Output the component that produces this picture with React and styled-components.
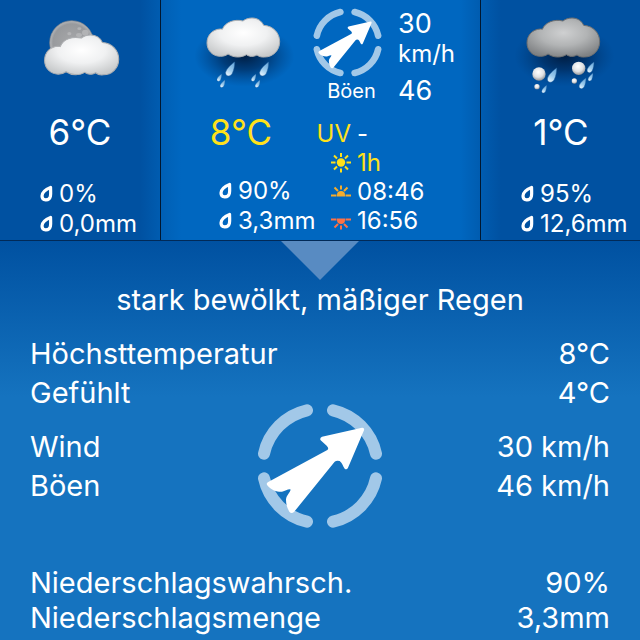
import React from "react";
import styled, { createGlobalStyle, css } from "styled-components";

const GlobalStyle = createGlobalStyle`
  *, *::before, *::after { box-sizing: border-box; }
  body {
    margin: 0;
    background: #1573bf;
    color: #fff;
    font-family: Inter, "Liberation Sans", sans-serif;
    font-weight: 400;
  }
`;

const Page = styled.main`
  min-height: 100vh;
  display: flex;
  flex-direction: column;
`;

const Days = styled.div`
  display: grid;
  grid-template-columns: 1fr 2fr 1fr;
  border-bottom: 1px solid #012a58;
`;

const cardTone = {
  before: "linear-gradient(270deg, #005cb0 0, #0051a1 20px)",
  active: "linear-gradient(90deg, #005fb4 0, #0067c0 20px, #0067c0 calc(100% - 20px), #005cb0 100%)",
  after: "linear-gradient(90deg, #005cb0 0, #0051a1 20px)",
};

const DayCard = styled.button`
  display: flex;
  min-width: 0;
  margin: 0;
  padding: 0 0 1px;
  border: 0;
  ${({ $tone }) => $tone !== "before" && css`border-left: 1px solid #01172f;`}
  background: ${({ $tone }) => cardTone[$tone]};
  color: inherit;
  font: inherit;
  text-align: left;
  cursor: pointer;
`;

const Summary = styled.span`
  flex: ${({ $wide }) => ($wide ? "0 0 152px" : "1")};
  min-width: 0;
  display: flex;
  flex-direction: column;
`;

const WeatherArt = styled.svg`
  display: block;
  flex: none;
  width: 160px;
  height: 108px;
`;

const Temperature = styled.span`
  width: 160px;
  text-align: center;
  font-size: 35px;
  line-height: 48px;
  color: ${({ $highlight }) => ($highlight ? "#ffe11a" : "#fff")};
`;

const Metrics = styled.span`
  display: flex;
  flex-direction: column;
  padding-top: ${({ $wide }) => ($wide ? "20px" : "23px")};
  padding-left: ${({ $wide }) => ($wide ? "58px" : "40px")};
`;

const Metric = styled.span`
  display: flex;
  align-items: center;
  gap: 6px;
  font-size: 24px;
  line-height: 30px;
  white-space: nowrap;
  color: ${({ $highlight }) => ($highlight ? "#ffe11a" : "#fff")};
`;

const DropIcon = styled.svg`
  flex: none;
  width: 13px;
  height: 17px;
  margin-bottom: 2px;
`;

const Side = styled.span`
  flex: 1;
  min-width: 0;
  display: flex;
  flex-direction: column;
`;

const WindBlock = styled.span`
  display: flex;
  gap: 16px;
  height: 119px;
  padding-top: 8px;
`;

const Gauge = styled.span`
  display: flex;
  flex-direction: column;
  align-items: center;
  font-size: 20px;
  line-height: 28px;
`;

const GaugeLabel = styled.span`
  padding-left: 8px;
`;

const WindFigures = styled.span`
  display: flex;
  flex-direction: column;
  font-size: 27px;
  line-height: 31px;
`;

const WindUnit = styled.span`
  font-size: 24px;
  line-height: 30px;
`;

const GustFigure = styled.span`
  padding-top: 6px;
`;

const SunMetric = styled(Metric)`
  line-height: 29px;
`;

const SunLabel = styled.span`
  width: 38px;
  display: flex;
  justify-content: flex-end;
  color: #ffe11a;
`;

const SunGlyph = styled.svg`
  width: 20px;
  height: 20px;
  color: ${({ $color }) => $color};
`;

const CompassSvg = styled.svg`
  display: block;
  width: ${({ $size }) => $size}px;
  height: ${({ $size }) => $size}px;
`;

const Details = styled.section`
  flex: 1;
  display: flex;
  flex-direction: column;
  background: linear-gradient(180deg, #0051a1 0, #1573bf 156px);
`;

const Pointer = styled.div`
  align-self: center;
  width: 78px;
  height: 39px;
  background: #588bc2;
  clip-path: polygon(0 0, 100% 0, 50% 100%);
`;

const Caption = styled.h1`
  margin: 0;
  font-size: 29px;
  line-height: 39px;
  font-weight: 400;
  text-align: center;
`;

const Group = styled.dl`
  margin: 0;
  padding: 0 30px;
`;

const TemperatureGroup = styled(Group)`
  margin-top: 15px;
`;

const RainGroup = styled(Group)`
  margin-top: 60px;
`;

const Row = styled.div`
  display: flex;
  justify-content: space-between;
  font-size: 29px;
  line-height: ${({ $tight }) => ($tight ? 35 : 39)}px;

  dd { margin: 0; }
`;

const WindGroup = styled.div`
  display: grid;
  align-items: center;
  margin-top: 15px;

  > * { grid-area: 1 / 1; }
  > svg { justify-self: center; margin: -24px 0; }
`;

function Compass({ size }) {
  return (
    <CompassSvg $size={size} viewBox="-189 -189 378 378" role="img" aria-label="Windrichtung Südwest">
      <g fill="none" stroke="#a2c8e8" strokeWidth="36" strokeLinecap="round">
        <path d="M-168-37A172 170 0 0 1-39-167" />
        <path d="M39-167A172 170 0 0 1 168-37" />
        <path d="M168 37A172 170 0 0 1 39 167" />
        <path d="M-39 167A172 170 0 0 1-168 37" />
      </g>
      <path
        fill="#fff"
        d="M126-115L6-88Q-2-84 2-77L20-61Q28-52 22-48L-154 47Q-164 52-157 59C-145 73-128 78-114 77C-104 76-97 69-89 70C-86 76-101 86-102 101C-102 116-97 128-92 137Q-86 144-78 138L44-13Q50-18 59-15C66-10 68-1 74 8Q80 13 84 5L132-107Q134-116 126-115Z"
      />
    </CompassSvg>
  );
}

function Droplet() {
  return (
    <DropIcon viewBox="0 0 13 17" aria-hidden="true">
      <path
        d="M10.6 2.4C6 4.2 2 7.4 2 11C2 16 9.2 16.2 10.4 11.4C11 8.6 10.5 5.4 10.6 2.4Z"
        fill="none" stroke="#fff" strokeWidth="3.2" strokeLinejoin="round"
      />
    </DropIcon>
  );
}

const CLOUD =
  "M178 87C155 88 138 105 138 129C138 152 156 169 178 169C188 169 196 166 201 162C210 168 220 171 230 171C240 171 250 168 256 164C262 168 270 170 276 169C281 169 285 166 288 165C294 170 303 172 311 171C336 171 356 151 356 125C356 99 337 78 308 76C302 63 290 54 273 54C262 54 252 58 246 63C218 56 192 68 184 88C182 87 180 87 178 87Z";

function Cloud({ id, dark, transform }) {
  return (
    <g transform={transform}>
      <defs>
        <radialGradient id={id} cx="0.5" cy="0.38" r="0.65">
          <stop offset="0" stopColor={dark ? "#cfd0d1" : "#ffffff"} />
          <stop offset="0.5" stopColor={dark ? "#b2b4b5" : "#f0f1f2"} />
          <stop offset="1" stopColor={dark ? "#808284" : "#c8cacb"} />
        </radialGradient>
      </defs>
      <path d={CLOUD} fill={`url(#${id})`} stroke={dark ? "#6d6f71" : "#aeb0b3"} strokeWidth="3" />
    </g>
  );
}

function Shade({ id }) {
  return (
    <>
      <defs>
        <radialGradient id={id}>
          <stop offset="0" stopColor="#001a3c" stopOpacity="0.95" />
          <stop offset="0.45" stopColor="#002553" stopOpacity="0.65" />
          <stop offset="1" stopColor="#003a78" stopOpacity="0" />
        </radialGradient>
      </defs>
      <ellipse cx="250" cy="168" rx="150" ry="92" fill={`url(#${id})`} />
    </>
  );
}

function Drops({ id, items }) {
  return (
    <>
      <defs>
        <linearGradient id={id} x1="0.7" y1="0" x2="0.3" y2="1">
          <stop offset="0" stopColor="#6aa9dc" />
          <stop offset="0.55" stopColor="#9ccbed" />
          <stop offset="1" stopColor="#e6f5ff" />
        </linearGradient>
      </defs>
      {items.map(([x, y, s]) => (
        <path
          key={`${x}-${y}`}
          transform={`translate(${x} ${y}) scale(${s})`}
          d="M0 0C-9 6-25 20-27 31C-29 44-13 46-7 34C-2 24 0 10 0 0Z"
          fill={`url(#${id})`} stroke="#28639e" strokeWidth="1.5"
        />
      ))}
    </>
  );
}

function MoonCloud() {
  return (
    <WeatherArt viewBox="0 0 480 324" role="img" aria-label="leicht bewölkt">
      <defs>
        <radialGradient id="moon">
          <stop offset="0" stopColor="#a7a8aa" />
          <stop offset="0.85" stopColor="#989a9d" />
          <stop offset="1" stopColor="#b5b7ba" />
        </radialGradient>
      </defs>
      <circle cx="215" cy="128" r="66" fill="url(#moon)" stroke="#808488" strokeWidth="2" />
      <g fill="#b2b3b5">
        <ellipse cx="256" cy="98" rx="10" ry="9" />
        <ellipse cx="238" cy="86" rx="6" ry="4" />
        <ellipse cx="208" cy="101" rx="6" ry="5" />
        <ellipse cx="237" cy="105" rx="9" ry="6" />
      </g>
      <Cloud id="cloud-moon" transform="translate(-7 50) scale(1.02)" />
    </WeatherArt>
  );
}

function RainCloud() {
  return (
    <WeatherArt viewBox="0 0 480 324" role="img" aria-label="mäßiger Regen">
      <Shade id="shade-rain" />
      <Cloud id="cloud-rain" />
      <Drops
        id="drops-rain"
        items={[[221, 186, 1], [323, 186, 1], [182, 222, 0.52], [192, 240, 0.54], [285, 222, 0.52], [297, 240, 0.54]]}
      />
    </WeatherArt>
  );
}

function SleetCloud() {
  const flakes = [[174, 222, 20], [293, 205, 20], [168, 260, 8], [280, 243, 8]];
  return (
    <WeatherArt viewBox="0 0 480 324" role="img" aria-label="Schneeregen">
      <defs>
        <radialGradient id="flake" cx="0.45" cy="0.35" r="0.65">
          <stop offset="0" stopColor="#ffffff" />
          <stop offset="0.6" stopColor="#e0e1e3" />
          <stop offset="1" stopColor="#939599" />
        </radialGradient>
      </defs>
      <Shade id="shade-sleet" />
      <Cloud id="cloud-sleet" dark />
      {flakes.map(([x, y, r]) => (
        <circle key={`${x}-${y}`} cx={x} cy={y} r={r} fill="url(#flake)" />
      ))}
      <Drops
        id="drops-sleet"
        items={[[227, 204, 1.02], [197, 256, 0.54], [339, 186, 0.76], [336, 220, 0.54], [315, 234, 0.76]]}
      />
    </WeatherArt>
  );
}

function Sun() {
  return (
    <SunGlyph $color="#ffe11a" viewBox="0 0 20 20" role="img" aria-label="Sonnenstunden">
      <circle cx="10" cy="9.5" r="4.2" fill="currentColor" />
      <path
        d="M10 0v4M10 15.5v4M0 9.5h4.5M15.5 9.5H20M3 2.5l3 3M14 13.5l3 3M17 2.5l-3 3M6 13.5l-3 3"
        stroke="currentColor" strokeWidth="2"
      />
    </SunGlyph>
  );
}

function HalfSun({ label, set }) {
  return (
    <SunGlyph $color={set ? "#ff7244" : "#f5ac2c"} viewBox="0 0 20 20" role="img" aria-label={label}>
      <g transform={set ? "translate(0 22) scale(1 -1)" : undefined}>
        <path d="M6 14.5v-1.5a4 4 0 0 1 8 0v1.5Z" fill="currentColor" />
        <path
          d="M0 13.5h5.5M14.5 13.5h5.5M10 3.5v4M3.5 5.5l3.5 3.5M16.5 5.5L13 9"
          stroke="currentColor" strokeWidth="2"
        />
      </g>
    </SunGlyph>
  );
}

function DaySummary({ art, temperature, chance, amount, wide }) {
  return (
    <Summary $wide={wide}>
      {art}
      <Temperature $highlight={wide}>{temperature}</Temperature>
      <Metrics $wide={wide}>
        <Metric><Droplet />{chance}</Metric>
        <Metric><Droplet />{amount}</Metric>
      </Metrics>
    </Summary>
  );
}

function DetailRow({ label, value, tight }) {
  return (
    <Row $tight={tight}>
      <dt>{label}</dt>
      <dd>{value}</dd>
    </Row>
  );
}

export default function App() {
  return (
    <>
      <GlobalStyle />
      <Page>
        <Days>
          <DayCard type="button" $tone="before">
            <DaySummary art={<MoonCloud />} temperature="6°C" chance="0%" amount="0,0mm" />
          </DayCard>
          <DayCard type="button" $tone="active" aria-pressed="true">
            <DaySummary wide art={<RainCloud />} temperature="8°C" chance="90%" amount="3,3mm" />
            <Side>
              <WindBlock>
                <Gauge>
                  <Compass size={69} />
                  <GaugeLabel>Böen</GaugeLabel>
                </Gauge>
                <WindFigures>
                  30
                  <WindUnit>km/h</WindUnit>
                  <GustFigure>46</GustFigure>
                </WindFigures>
              </WindBlock>
              <SunMetric><SunLabel>UV</SunLabel>-</SunMetric>
              <SunMetric $highlight><SunLabel><Sun /></SunLabel>1h</SunMetric>
              <SunMetric><SunLabel><HalfSun label="Sonnenaufgang" /></SunLabel>08:46</SunMetric>
              <SunMetric><SunLabel><HalfSun set label="Sonnenuntergang" /></SunLabel>16:56</SunMetric>
            </Side>
          </DayCard>
          <DayCard type="button" $tone="after">
            <DaySummary art={<SleetCloud />} temperature="1°C" chance="95%" amount="12,6mm" />
          </DayCard>
        </Days>
        <Details>
          <Pointer />
          <Caption>stark bewölkt, mäßiger Regen</Caption>
          <TemperatureGroup>
            <DetailRow label="Höchsttemperatur" value="8°C" />
            <DetailRow label="Gefühlt" value="4°C" />
          </TemperatureGroup>
          <WindGroup>
            <Group>
              <DetailRow label="Wind" value="30 km/h" />
              <DetailRow label="Böen" value="46 km/h" />
            </Group>
            <Compass size={126} />
          </WindGroup>
          <RainGroup>
            <DetailRow tight label="Niederschlagswahrsch." value="90%" />
            <DetailRow tight label="Niederschlagsmenge" value="3,3mm" />
          </RainGroup>
        </Details>
      </Page>
    </>
  );
}
